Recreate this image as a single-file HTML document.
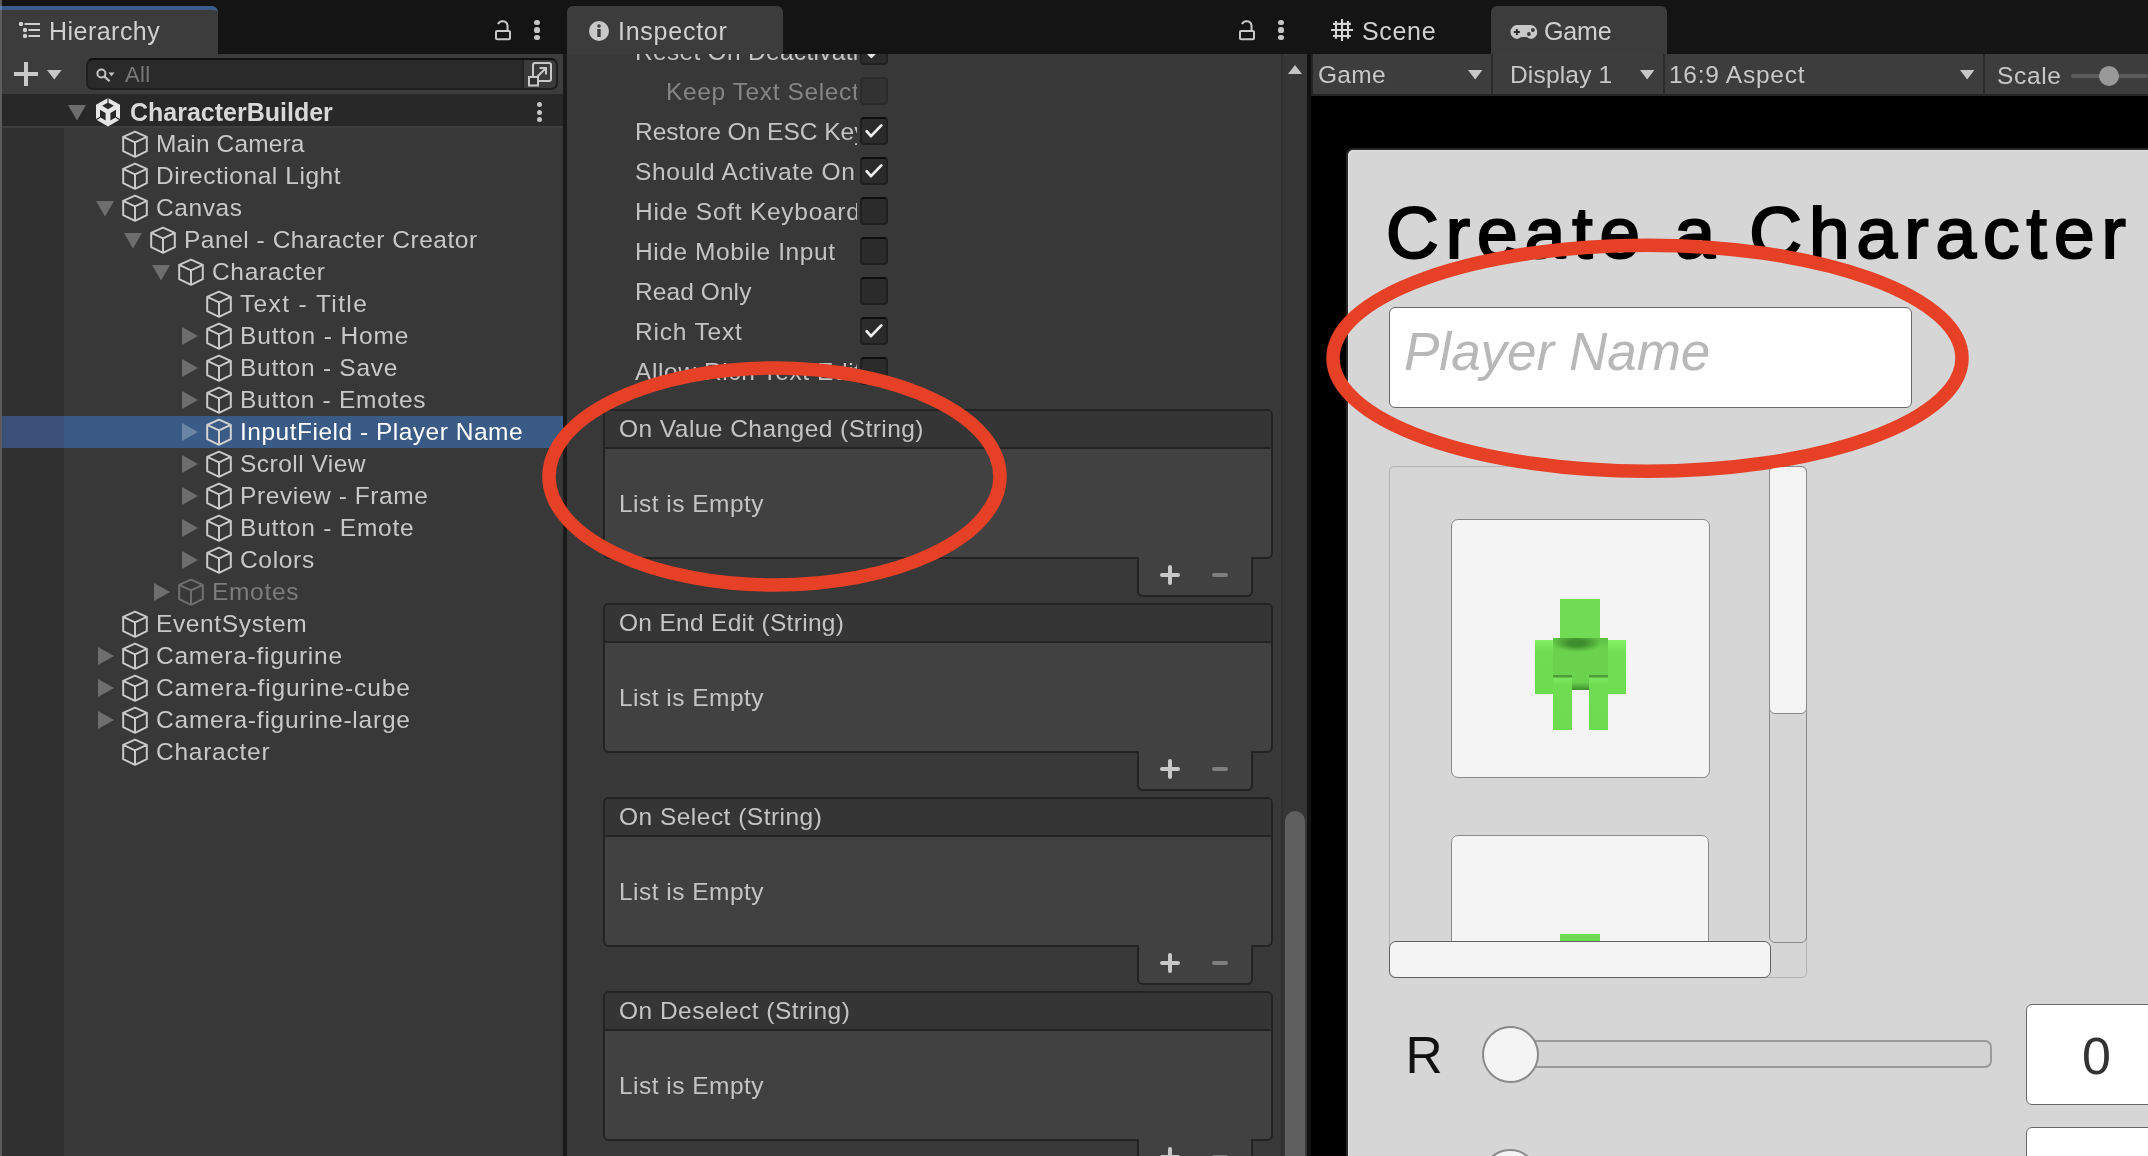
<!DOCTYPE html>
<html><head><meta charset="utf-8">
<style>
*{margin:0;padding:0;box-sizing:border-box}
html,body{width:2148px;height:1156px;overflow:hidden;background:#141414;font-family:"Liberation Sans",sans-serif;color:#c8c8c8}
.a{position:absolute}
.t{position:absolute;white-space:pre;font-size:24.5px;line-height:32px;letter-spacing:0.3px;will-change:transform}
svg{position:absolute;overflow:visible}
</style></head><body>

<div class="a" style="left:0;top:0;width:2px;height:1156px;background:#5c5c5c"></div>
<div class="a" style="left:2px;top:6px;width:216px;height:48px;background:#3c3c3c;border-radius:0 6px 0 0;border-top:4px solid #395e8e"></div>
<div class="a" style="left:0;top:6px;width:2px;height:4px;background:#5b7fa8"></div>
<div class="t" style="left:49.2px;top:14.6px;font-size:25px;letter-spacing:0.47px;color:#d0d0d0">Hierarchy</div>
<svg style="left:18px;top:21px" width="24" height="18" viewBox="0 0 24 18"><circle cx="3" cy="3" r="2.2" fill="#d0d0d0"/><circle cx="7" cy="9" r="2.2" fill="#d0d0d0"/><circle cx="7" cy="15" r="2.2" fill="#d0d0d0"/><path d="M6.5 3 H22 M10.5 9 H22 M10.5 15 H22" stroke="#d0d0d0" stroke-width="2"/></svg>
<svg style="left:494px;top:19px" width="18" height="22" viewBox="0 0 18 22"><path d="M4 5.2 A5 5 0 0 1 13.5 6.5 V12" fill="none" stroke="#c8c8c8" stroke-width="2"/><rect x="2" y="12" width="14" height="8.3" rx="1" fill="none" stroke="#c8c8c8" stroke-width="2"/></svg>
<div class="a" style="left:534.4px;top:19.9px;width:5.2px;height:5.2px;border-radius:50%;background:#c4c4c4"></div><div class="a" style="left:534.4px;top:27.4px;width:5.2px;height:5.2px;border-radius:50%;background:#c4c4c4"></div><div class="a" style="left:534.4px;top:34.9px;width:5.2px;height:5.2px;border-radius:50%;background:#c4c4c4"></div>
<div class="a" style="left:2px;top:54px;width:561px;height:40px;background:#3c3c3c"></div>
<div class="a" style="left:14px;top:72px;width:24px;height:4px;background:#c8c8c8"></div>
<div class="a" style="left:24px;top:62px;width:4px;height:24px;background:#c8c8c8"></div>
<svg style="left:47px;top:70px" width="15" height="10" viewBox="0 0 15 10"><path d="M0 0 H14.6 L7.3 9.6 Z" fill="#c8c8c8"/></svg>
<div class="a" style="left:86px;top:58px;width:472px;height:32px;background:#2a2a2a;border:2px solid #1f1f1f;border-top-color:#101010;border-radius:7px"></div>
<div class="a" style="left:522px;top:60px;width:34px;height:28px;background:#3b3b3b;border-left:2px solid #232323;border-radius:0 5px 5px 0"></div>
<svg style="left:95.5px;top:67.5px" width="20" height="17" viewBox="0 0 20 17"><circle cx="5.4" cy="5.5" r="4" fill="none" stroke="#c4c4c4" stroke-width="2"/><path d="M8.3 8.4 L13.6 13.3" stroke="#c4c4c4" stroke-width="2.2"/><path d="M12.5 4.4 H18.5 L15.5 8.3 Z" fill="#c4c4c4"/></svg>
<div class="t" style="left:124.5px;top:58.5px;font-size:22px;color:#787878;letter-spacing:0.4px">All</div>
<svg style="left:527px;top:61px" width="26" height="26" viewBox="0 0 26 26"><rect x="6" y="2" width="18" height="18" rx="2" fill="none" stroke="#c8c8c8" stroke-width="2"/><rect x="2" y="16" width="9" height="8.5" fill="#2f2f2f" stroke="#c8c8c8" stroke-width="2"/><path d="M9.5 16.5 L18.5 7.5 M12.5 6.9 H19 V13.4" fill="none" stroke="#c8c8c8" stroke-width="2"/></svg>
<div class="a" style="left:2px;top:94px;width:561px;height:1062px;background:#383838"></div>
<div class="a" style="left:2px;top:94px;width:62px;height:1062px;background:#303030"></div>
<div class="a" style="left:2px;top:94px;width:561px;height:32px;background:#282828"></div>
<div class="a" style="left:2px;top:126px;width:561px;height:2px;background:#3e3e3e"></div>
<div class="a" style="left:64px;top:416px;width:499px;height:32px;background:#3a5b85"></div>
<div class="a" style="left:2px;top:416px;width:62px;height:32px;background:#3a5079"></div>
<svg style="left:68px;top:105px" width="18" height="16" viewBox="0 0 18 16"><path d="M0 0 L18 0 L9 15.5 Z" fill="#6e6e6e"/></svg>
<svg style="left:96px;top:97.6px" width="24" height="29" viewBox="0 0 24 29"><path d="M12 0 L24 6.8 L24 21.4 L12 28.6 L0 21.4 L0 6.8 Z" fill="#e6e6e6"/><path d="M12 4.4 L17.9 7.8 L12 11.2 L6.1 7.8 Z M4 11.8 L9.6 15 L9.6 22.6 L4 19.3 Z M20 11.8 L20 19.3 L14.4 22.6 L14.4 15 Z" fill="#282828"/><path d="M12 0 V4.8 M4.3 19.3 L0 21.8 M19.7 19.3 L24 21.8" stroke="#1e1e1e" stroke-width="1.1"/></svg>
<div class="t" style="left:129.5px;top:95.9px;font-size:25px;font-weight:bold;color:#d8d8d8;letter-spacing:0px">CharacterBuilder</div>
<div class="a" style="left:536.5px;top:102.0px;width:5px;height:5px;border-radius:50%;background:#c4c4c4"></div>
<div class="a" style="left:536.5px;top:109.5px;width:5px;height:5px;border-radius:50%;background:#c4c4c4"></div>
<div class="a" style="left:536.5px;top:117.0px;width:5px;height:5px;border-radius:50%;background:#c4c4c4"></div>
<svg style="left:122px;top:130px" width="26" height="28" viewBox="0 0 26 28"><path d="M13 1.6 L24.8 6.9 L24.8 21.2 L13 26.8 L1.2 21.2 L1.2 6.9 Z M1.2 6.9 L13 12.4 L24.8 6.9 M13 12.4 L13 26.8" fill="none" stroke="#c9c9c9" stroke-width="2" stroke-linejoin="round"/></svg>
<div class="t" style="left:155.5px;top:127.7px;color:#c8c8c8;letter-spacing:0.140px">Main Camera</div>
<svg style="left:122px;top:162px" width="26" height="28" viewBox="0 0 26 28"><path d="M13 1.6 L24.8 6.9 L24.8 21.2 L13 26.8 L1.2 21.2 L1.2 6.9 Z M1.2 6.9 L13 12.4 L24.8 6.9 M13 12.4 L13 26.8" fill="none" stroke="#c9c9c9" stroke-width="2" stroke-linejoin="round"/></svg>
<div class="t" style="left:155.5px;top:159.7px;color:#c8c8c8;letter-spacing:0.556px">Directional Light</div>
<svg style="left:96px;top:201px" width="18" height="16" viewBox="0 0 18 16"><path d="M0 0 L18 0 L9 15.5 Z" fill="#6e6e6e"/></svg>
<svg style="left:122px;top:194px" width="26" height="28" viewBox="0 0 26 28"><path d="M13 1.6 L24.8 6.9 L24.8 21.2 L13 26.8 L1.2 21.2 L1.2 6.9 Z M1.2 6.9 L13 12.4 L24.8 6.9 M13 12.4 L13 26.8" fill="none" stroke="#c9c9c9" stroke-width="2" stroke-linejoin="round"/></svg>
<div class="t" style="left:155.5px;top:191.7px;color:#c8c8c8;letter-spacing:0.580px">Canvas</div>
<svg style="left:124px;top:233px" width="18" height="16" viewBox="0 0 18 16"><path d="M0 0 L18 0 L9 15.5 Z" fill="#6e6e6e"/></svg>
<svg style="left:150px;top:226px" width="26" height="28" viewBox="0 0 26 28"><path d="M13 1.6 L24.8 6.9 L24.8 21.2 L13 26.8 L1.2 21.2 L1.2 6.9 Z M1.2 6.9 L13 12.4 L24.8 6.9 M13 12.4 L13 26.8" fill="none" stroke="#c9c9c9" stroke-width="2" stroke-linejoin="round"/></svg>
<div class="t" style="left:183.5px;top:223.7px;color:#c8c8c8;letter-spacing:0.526px">Panel - Character Creator</div>
<svg style="left:152px;top:265px" width="18" height="16" viewBox="0 0 18 16"><path d="M0 0 L18 0 L9 15.5 Z" fill="#6e6e6e"/></svg>
<svg style="left:178px;top:258px" width="26" height="28" viewBox="0 0 26 28"><path d="M13 1.6 L24.8 6.9 L24.8 21.2 L13 26.8 L1.2 21.2 L1.2 6.9 Z M1.2 6.9 L13 12.4 L24.8 6.9 M13 12.4 L13 26.8" fill="none" stroke="#c9c9c9" stroke-width="2" stroke-linejoin="round"/></svg>
<div class="t" style="left:211.5px;top:255.7px;color:#c8c8c8;letter-spacing:0.675px">Character</div>
<svg style="left:206px;top:290px" width="26" height="28" viewBox="0 0 26 28"><path d="M13 1.6 L24.8 6.9 L24.8 21.2 L13 26.8 L1.2 21.2 L1.2 6.9 Z M1.2 6.9 L13 12.4 L24.8 6.9 M13 12.4 L13 26.8" fill="none" stroke="#c9c9c9" stroke-width="2" stroke-linejoin="round"/></svg>
<div class="t" style="left:239.5px;top:287.7px;color:#c8c8c8;letter-spacing:1.374px">Text - Title</div>
<svg style="left:182px;top:327px" width="16" height="18" viewBox="0 0 16 18"><path d="M0 0 L16 9 L0 18 Z" fill="#6e6e6e"/></svg>
<svg style="left:206px;top:322px" width="26" height="28" viewBox="0 0 26 28"><path d="M13 1.6 L24.8 6.9 L24.8 21.2 L13 26.8 L1.2 21.2 L1.2 6.9 Z M1.2 6.9 L13 12.4 L24.8 6.9 M13 12.4 L13 26.8" fill="none" stroke="#c9c9c9" stroke-width="2" stroke-linejoin="round"/></svg>
<div class="t" style="left:239.5px;top:319.7px;color:#c8c8c8;letter-spacing:0.867px">Button - Home</div>
<svg style="left:182px;top:359px" width="16" height="18" viewBox="0 0 16 18"><path d="M0 0 L16 9 L0 18 Z" fill="#6e6e6e"/></svg>
<svg style="left:206px;top:354px" width="26" height="28" viewBox="0 0 26 28"><path d="M13 1.6 L24.8 6.9 L24.8 21.2 L13 26.8 L1.2 21.2 L1.2 6.9 Z M1.2 6.9 L13 12.4 L24.8 6.9 M13 12.4 L13 26.8" fill="none" stroke="#c9c9c9" stroke-width="2" stroke-linejoin="round"/></svg>
<div class="t" style="left:239.5px;top:351.7px;color:#c8c8c8;letter-spacing:0.749px">Button - Save</div>
<svg style="left:182px;top:391px" width="16" height="18" viewBox="0 0 16 18"><path d="M0 0 L16 9 L0 18 Z" fill="#6e6e6e"/></svg>
<svg style="left:206px;top:386px" width="26" height="28" viewBox="0 0 26 28"><path d="M13 1.6 L24.8 6.9 L24.8 21.2 L13 26.8 L1.2 21.2 L1.2 6.9 Z M1.2 6.9 L13 12.4 L24.8 6.9 M13 12.4 L13 26.8" fill="none" stroke="#c9c9c9" stroke-width="2" stroke-linejoin="round"/></svg>
<div class="t" style="left:239.5px;top:383.7px;color:#c8c8c8;letter-spacing:0.707px">Button - Emotes</div>
<svg style="left:182px;top:423px" width="16" height="18" viewBox="0 0 16 18"><path d="M0 0 L16 9 L0 18 Z" fill="#6a85a6"/></svg>
<svg style="left:206px;top:418px" width="26" height="28" viewBox="0 0 26 28"><path d="M13 1.6 L24.8 6.9 L24.8 21.2 L13 26.8 L1.2 21.2 L1.2 6.9 Z M1.2 6.9 L13 12.4 L24.8 6.9 M13 12.4 L13 26.8" fill="none" stroke="#d2d2d2" stroke-width="2" stroke-linejoin="round"/></svg>
<div class="t" style="left:239.5px;top:415.7px;color:#ffffff;letter-spacing:0.505px">InputField - Player Name</div>
<svg style="left:182px;top:455px" width="16" height="18" viewBox="0 0 16 18"><path d="M0 0 L16 9 L0 18 Z" fill="#6e6e6e"/></svg>
<svg style="left:206px;top:450px" width="26" height="28" viewBox="0 0 26 28"><path d="M13 1.6 L24.8 6.9 L24.8 21.2 L13 26.8 L1.2 21.2 L1.2 6.9 Z M1.2 6.9 L13 12.4 L24.8 6.9 M13 12.4 L13 26.8" fill="none" stroke="#c9c9c9" stroke-width="2" stroke-linejoin="round"/></svg>
<div class="t" style="left:239.5px;top:447.7px;color:#c8c8c8;letter-spacing:0.480px">Scroll View</div>
<svg style="left:182px;top:487px" width="16" height="18" viewBox="0 0 16 18"><path d="M0 0 L16 9 L0 18 Z" fill="#6e6e6e"/></svg>
<svg style="left:206px;top:482px" width="26" height="28" viewBox="0 0 26 28"><path d="M13 1.6 L24.8 6.9 L24.8 21.2 L13 26.8 L1.2 21.2 L1.2 6.9 Z M1.2 6.9 L13 12.4 L24.8 6.9 M13 12.4 L13 26.8" fill="none" stroke="#c9c9c9" stroke-width="2" stroke-linejoin="round"/></svg>
<div class="t" style="left:239.5px;top:479.7px;color:#c8c8c8;letter-spacing:0.586px">Preview - Frame</div>
<svg style="left:182px;top:519px" width="16" height="18" viewBox="0 0 16 18"><path d="M0 0 L16 9 L0 18 Z" fill="#6e6e6e"/></svg>
<svg style="left:206px;top:514px" width="26" height="28" viewBox="0 0 26 28"><path d="M13 1.6 L24.8 6.9 L24.8 21.2 L13 26.8 L1.2 21.2 L1.2 6.9 Z M1.2 6.9 L13 12.4 L24.8 6.9 M13 12.4 L13 26.8" fill="none" stroke="#c9c9c9" stroke-width="2" stroke-linejoin="round"/></svg>
<div class="t" style="left:239.5px;top:511.7px;color:#c8c8c8;letter-spacing:0.793px">Button - Emote</div>
<svg style="left:182px;top:551px" width="16" height="18" viewBox="0 0 16 18"><path d="M0 0 L16 9 L0 18 Z" fill="#6e6e6e"/></svg>
<svg style="left:206px;top:546px" width="26" height="28" viewBox="0 0 26 28"><path d="M13 1.6 L24.8 6.9 L24.8 21.2 L13 26.8 L1.2 21.2 L1.2 6.9 Z M1.2 6.9 L13 12.4 L24.8 6.9 M13 12.4 L13 26.8" fill="none" stroke="#c9c9c9" stroke-width="2" stroke-linejoin="round"/></svg>
<div class="t" style="left:239.5px;top:543.7px;color:#c8c8c8;letter-spacing:0.680px">Colors</div>
<svg style="left:154px;top:583px" width="16" height="18" viewBox="0 0 16 18"><path d="M0 0 L16 9 L0 18 Z" fill="#6e6e6e"/></svg>
<svg style="left:178px;top:578px" width="26" height="28" viewBox="0 0 26 28"><path d="M13 1.6 L24.8 6.9 L24.8 21.2 L13 26.8 L1.2 21.2 L1.2 6.9 Z M1.2 6.9 L13 12.4 L24.8 6.9 M13 12.4 L13 26.8" fill="none" stroke="#6f6f6f" stroke-width="2" stroke-linejoin="round"/></svg>
<div class="t" style="left:211.5px;top:575.7px;color:#7c7c7c;letter-spacing:0.680px">Emotes</div>
<svg style="left:122px;top:610px" width="26" height="28" viewBox="0 0 26 28"><path d="M13 1.6 L24.8 6.9 L24.8 21.2 L13 26.8 L1.2 21.2 L1.2 6.9 Z M1.2 6.9 L13 12.4 L24.8 6.9 M13 12.4 L13 26.8" fill="none" stroke="#c9c9c9" stroke-width="2" stroke-linejoin="round"/></svg>
<div class="t" style="left:155.5px;top:607.7px;color:#c8c8c8;letter-spacing:0.630px">EventSystem</div>
<svg style="left:98px;top:647px" width="16" height="18" viewBox="0 0 16 18"><path d="M0 0 L16 9 L0 18 Z" fill="#6e6e6e"/></svg>
<svg style="left:122px;top:642px" width="26" height="28" viewBox="0 0 26 28"><path d="M13 1.6 L24.8 6.9 L24.8 21.2 L13 26.8 L1.2 21.2 L1.2 6.9 Z M1.2 6.9 L13 12.4 L24.8 6.9 M13 12.4 L13 26.8" fill="none" stroke="#c9c9c9" stroke-width="2" stroke-linejoin="round"/></svg>
<div class="t" style="left:155.5px;top:639.7px;color:#c8c8c8;letter-spacing:0.743px">Camera-figurine</div>
<svg style="left:98px;top:679px" width="16" height="18" viewBox="0 0 16 18"><path d="M0 0 L16 9 L0 18 Z" fill="#6e6e6e"/></svg>
<svg style="left:122px;top:674px" width="26" height="28" viewBox="0 0 26 28"><path d="M13 1.6 L24.8 6.9 L24.8 21.2 L13 26.8 L1.2 21.2 L1.2 6.9 Z M1.2 6.9 L13 12.4 L24.8 6.9 M13 12.4 L13 26.8" fill="none" stroke="#c9c9c9" stroke-width="2" stroke-linejoin="round"/></svg>
<div class="t" style="left:155.5px;top:671.7px;color:#c8c8c8;letter-spacing:0.889px">Camera-figurine-cube</div>
<svg style="left:98px;top:711px" width="16" height="18" viewBox="0 0 16 18"><path d="M0 0 L16 9 L0 18 Z" fill="#6e6e6e"/></svg>
<svg style="left:122px;top:706px" width="26" height="28" viewBox="0 0 26 28"><path d="M13 1.6 L24.8 6.9 L24.8 21.2 L13 26.8 L1.2 21.2 L1.2 6.9 Z M1.2 6.9 L13 12.4 L24.8 6.9 M13 12.4 L13 26.8" fill="none" stroke="#c9c9c9" stroke-width="2" stroke-linejoin="round"/></svg>
<div class="t" style="left:155.5px;top:703.7px;color:#c8c8c8;letter-spacing:0.785px">Camera-figurine-large</div>
<svg style="left:122px;top:738px" width="26" height="28" viewBox="0 0 26 28"><path d="M13 1.6 L24.8 6.9 L24.8 21.2 L13 26.8 L1.2 21.2 L1.2 6.9 Z M1.2 6.9 L13 12.4 L24.8 6.9 M13 12.4 L13 26.8" fill="none" stroke="#c9c9c9" stroke-width="2" stroke-linejoin="round"/></svg>
<div class="t" style="left:155.5px;top:735.7px;color:#c8c8c8;letter-spacing:0.750px">Character</div>
<div class="a" style="left:563px;top:54px;width:4px;height:1102px;background:#191919"></div>
<div class="a" style="left:567px;top:6px;width:216px;height:48px;background:#3c3c3c;border-radius:6px 6px 0 0"></div>
<div class="t" style="left:617.8px;top:14.6px;font-size:25px;letter-spacing:0.75px;color:#d0d0d0">Inspector</div>
<svg style="left:589px;top:21px" width="20" height="20" viewBox="0 0 20 20"><circle cx="10" cy="10" r="10" fill="#c8c8c8"/><circle cx="10" cy="5" r="1.8" fill="#3c3c3c"/><rect x="8.3" y="8" width="3.4" height="8" fill="#3c3c3c"/></svg>
<svg style="left:1238px;top:19px" width="18" height="22" viewBox="0 0 18 22"><path d="M4 5.2 A5 5 0 0 1 13.5 6.5 V12" fill="none" stroke="#c8c8c8" stroke-width="2"/><rect x="2" y="12" width="14" height="8.3" rx="1" fill="none" stroke="#c8c8c8" stroke-width="2"/></svg>
<div class="a" style="left:1278.4px;top:19.9px;width:5.2px;height:5.2px;border-radius:50%;background:#c4c4c4"></div><div class="a" style="left:1278.4px;top:27.4px;width:5.2px;height:5.2px;border-radius:50%;background:#c4c4c4"></div><div class="a" style="left:1278.4px;top:34.9px;width:5.2px;height:5.2px;border-radius:50%;background:#c4c4c4"></div>
<div class="a" style="left:567px;top:54px;width:740px;height:1102px;background:#383838"></div>
<div class="a" style="left:1281px;top:54px;width:2px;height:1102px;background:#2f2f2f"></div>
<div class="a" style="left:1283px;top:54px;width:24px;height:1102px;background:#363636"></div>
<div class="a" style="left:567px;top:54px;width:714px;height:1102px;overflow:hidden">
<div class="a" style="left:67.5px;top:-18.1px;width:222.5px;height:32px;overflow:hidden"><div class="t" style="left:0;top:0;color:#c4c4c4;letter-spacing:0.3px">Reset On Deactivation</div></div>
<div class="a" style="left:293px;top:-16.6px;width:28px;height:28px;background:#2b2b2b;border:2px solid #212121;border-radius:4px"></div>
<svg style="left:299.6px;top:-0.20000000000000284px" width="9" height="5" viewBox="0 0 9 5"><path d="M0 0 H8.8 L4.4 4.5 Z" fill="#e6e6e6"/></svg>
<div class="a" style="left:98.70000000000005px;top:21.599999999999994px;width:191.29999999999995px;height:32px;overflow:hidden"><div class="t" style="left:0;top:0;color:#858585;letter-spacing:0.62px">Keep Text Selection</div></div>
<div class="a" style="left:293px;top:23.099999999999994px;width:28px;height:28px;background:#323232;border:2px solid #2b2b2b;border-radius:4px"></div>
<div class="a" style="left:67.5px;top:61.900000000000006px;width:222.5px;height:32px;overflow:hidden"><div class="t" style="left:0;top:0;color:#c4c4c4;letter-spacing:0.0px">Restore On ESC Key</div></div>
<div class="a" style="left:293px;top:63.400000000000006px;width:28px;height:28px;background:#2b2b2b;border:2px solid #1f1f1f;border-top-color:#0d0d0d;border-radius:4px"><svg style="left:0;top:0" width="24" height="24" viewBox="0 0 24 24"><path d="M4.7 12.3 L9 17.1 L19.3 6.4" fill="none" stroke="#ececec" stroke-width="2.8" stroke-linecap="round" stroke-linejoin="round"/></svg></div>
<div class="a" style="left:67.5px;top:101.9px;width:222.5px;height:32px;overflow:hidden"><div class="t" style="left:0;top:0;color:#c4c4c4;letter-spacing:0.68px">Should Activate On Select</div></div>
<div class="a" style="left:293px;top:103.4px;width:28px;height:28px;background:#2b2b2b;border:2px solid #1f1f1f;border-top-color:#0d0d0d;border-radius:4px"><svg style="left:0;top:0" width="24" height="24" viewBox="0 0 24 24"><path d="M4.7 12.3 L9 17.1 L19.3 6.4" fill="none" stroke="#ececec" stroke-width="2.8" stroke-linecap="round" stroke-linejoin="round"/></svg></div>
<div class="a" style="left:67.5px;top:141.9px;width:222.5px;height:32px;overflow:hidden"><div class="t" style="left:0;top:0;color:#c4c4c4;letter-spacing:0.73px">Hide Soft Keyboard</div></div>
<div class="a" style="left:293px;top:143.4px;width:28px;height:28px;background:#2b2b2b;border:2px solid #1f1f1f;border-top-color:#0d0d0d;border-radius:4px"></div>
<div class="a" style="left:67.5px;top:181.9px;width:222.5px;height:32px;overflow:hidden"><div class="t" style="left:0;top:0;color:#c4c4c4;letter-spacing:0.58px">Hide Mobile Input</div></div>
<div class="a" style="left:293px;top:183.4px;width:28px;height:28px;background:#2b2b2b;border:2px solid #1f1f1f;border-top-color:#0d0d0d;border-radius:4px"></div>
<div class="a" style="left:67.5px;top:221.89999999999998px;width:222.5px;height:32px;overflow:hidden"><div class="t" style="left:0;top:0;color:#c4c4c4;letter-spacing:0.08px">Read Only</div></div>
<div class="a" style="left:293px;top:223.39999999999998px;width:28px;height:28px;background:#2b2b2b;border:2px solid #1f1f1f;border-top-color:#0d0d0d;border-radius:4px"></div>
<div class="a" style="left:67.5px;top:261.9px;width:222.5px;height:32px;overflow:hidden"><div class="t" style="left:0;top:0;color:#c4c4c4;letter-spacing:0.815px">Rich Text</div></div>
<div class="a" style="left:293px;top:263.4px;width:28px;height:28px;background:#2b2b2b;border:2px solid #1f1f1f;border-top-color:#0d0d0d;border-radius:4px"><svg style="left:0;top:0" width="24" height="24" viewBox="0 0 24 24"><path d="M4.7 12.3 L9 17.1 L19.3 6.4" fill="none" stroke="#ececec" stroke-width="2.8" stroke-linecap="round" stroke-linejoin="round"/></svg></div>
<div class="a" style="left:67.5px;top:301.9px;width:222.5px;height:32px;overflow:hidden"><div class="t" style="left:0;top:0;color:#c4c4c4;letter-spacing:0.6px">Allow Rich Text Editing</div></div>
<div class="a" style="left:293px;top:303.4px;width:28px;height:28px;background:#2b2b2b;border:2px solid #1f1f1f;border-top-color:#0d0d0d;border-radius:4px"></div>
<div class="a" style="left:36px;top:355px;width:670px;height:150px;background:#414141;border:2px solid #232323;border-radius:6px;overflow:hidden"><div class="a" style="left:0;top:0;width:666px;height:38px;background:#353535;border-bottom:2px solid #232323"></div></div>
<div class="a" style="left:570px;top:503px;width:116px;height:40px;background:#414141;border:2px solid #232323;border-top:none;border-radius:0 0 6px 6px"></div>
<div class="a" style="left:593px;top:519px;width:20px;height:4px;border-radius:2px;background:#c8c8c8"></div>
<div class="a" style="left:601px;top:511px;width:4px;height:20px;border-radius:2px;background:#c8c8c8"></div>
<div class="a" style="left:645px;top:519px;width:16px;height:4px;border-radius:2px;background:#7f7f7f"></div>
<div class="t" style="left:51.60000000000002px;top:359.4px;color:#c4c4c4;letter-spacing:0.45px">On Value Changed (String)</div>
<div class="t" style="left:51.60000000000002px;top:433.9px;color:#c4c4c4;letter-spacing:0.47px">List is Empty</div>
<div class="a" style="left:36px;top:549px;width:670px;height:150px;background:#414141;border:2px solid #232323;border-radius:6px;overflow:hidden"><div class="a" style="left:0;top:0;width:666px;height:38px;background:#353535;border-bottom:2px solid #232323"></div></div>
<div class="a" style="left:570px;top:697px;width:116px;height:40px;background:#414141;border:2px solid #232323;border-top:none;border-radius:0 0 6px 6px"></div>
<div class="a" style="left:593px;top:713px;width:20px;height:4px;border-radius:2px;background:#c8c8c8"></div>
<div class="a" style="left:601px;top:705px;width:4px;height:20px;border-radius:2px;background:#c8c8c8"></div>
<div class="a" style="left:645px;top:713px;width:16px;height:4px;border-radius:2px;background:#7f7f7f"></div>
<div class="t" style="left:51.60000000000002px;top:553.4px;color:#c4c4c4;letter-spacing:0.3px">On End Edit (String)</div>
<div class="t" style="left:51.60000000000002px;top:627.9px;color:#c4c4c4;letter-spacing:0.47px">List is Empty</div>
<div class="a" style="left:36px;top:743px;width:670px;height:150px;background:#414141;border:2px solid #232323;border-radius:6px;overflow:hidden"><div class="a" style="left:0;top:0;width:666px;height:38px;background:#353535;border-bottom:2px solid #232323"></div></div>
<div class="a" style="left:570px;top:891px;width:116px;height:40px;background:#414141;border:2px solid #232323;border-top:none;border-radius:0 0 6px 6px"></div>
<div class="a" style="left:593px;top:907px;width:20px;height:4px;border-radius:2px;background:#c8c8c8"></div>
<div class="a" style="left:601px;top:899px;width:4px;height:20px;border-radius:2px;background:#c8c8c8"></div>
<div class="a" style="left:645px;top:907px;width:16px;height:4px;border-radius:2px;background:#7f7f7f"></div>
<div class="t" style="left:51.60000000000002px;top:747.4px;color:#c4c4c4;letter-spacing:0.48px">On Select (String)</div>
<div class="t" style="left:51.60000000000002px;top:821.9px;color:#c4c4c4;letter-spacing:0.47px">List is Empty</div>
<div class="a" style="left:36px;top:937px;width:670px;height:150px;background:#414141;border:2px solid #232323;border-radius:6px;overflow:hidden"><div class="a" style="left:0;top:0;width:666px;height:38px;background:#353535;border-bottom:2px solid #232323"></div></div>
<div class="a" style="left:570px;top:1085px;width:116px;height:40px;background:#414141;border:2px solid #232323;border-top:none;border-radius:0 0 6px 6px"></div>
<div class="a" style="left:593px;top:1101px;width:20px;height:4px;border-radius:2px;background:#c8c8c8"></div>
<div class="a" style="left:601px;top:1093px;width:4px;height:20px;border-radius:2px;background:#c8c8c8"></div>
<div class="a" style="left:645px;top:1101px;width:16px;height:4px;border-radius:2px;background:#7f7f7f"></div>
<div class="t" style="left:51.60000000000002px;top:941.4px;color:#c4c4c4;letter-spacing:0.47px">On Deselect (String)</div>
<div class="t" style="left:51.60000000000002px;top:1015.9000000000001px;color:#c4c4c4;letter-spacing:0.47px">List is Empty</div>
</div>
<svg style="left:1288px;top:65px" width="14" height="9" viewBox="0 0 14 9"><path d="M7 0 L14 9 H0 Z" fill="#c4c4c4"/></svg>
<div class="a" style="left:1285px;top:811px;width:20px;height:400px;background:#5f5f5f;border-radius:10px"></div>
<div class="a" style="left:1307px;top:54px;width:4px;height:1102px;background:#121212"></div>
<div class="a" style="left:1491px;top:6px;width:176px;height:48px;background:#3c3c3c;border-radius:6px 6px 0 0"></div>
<div class="t" style="left:1361.5px;top:14.6px;font-size:25px;letter-spacing:0.675px;color:#d0d0d0">Scene</div>
<div class="t" style="left:1543.8px;top:14.6px;font-size:25px;letter-spacing:-0.13px;color:#d0d0d0">Game</div>
<svg style="left:1330px;top:18px" width="24" height="24" viewBox="0 0 24 24"><path d="M6 3 V20.8 M12 1.1 V22.9 M18 3 V20.8 M3 5.9 H20.9 M1.1 12 H23 M3 18 H20.9" stroke="#d4d4d4" stroke-width="2.1"/></svg>
<svg style="left:1509px;top:24px" width="30" height="16" viewBox="0 0 30 16"><path d="M7.5 0.9 H22 A7.1 7.1 0 0 1 22 15 C19.5 15 19 13.1 17 13.1 H13 C11 13.1 10.5 15 8 15 A7.1 7.1 0 0 1 7.5 0.9 Z" fill="#c8c8c8"/><path d="M4.9 7.9 H10.9 M7.9 4.9 V10.9" stroke="#2e2e2e" stroke-width="2"/><circle cx="23.9" cy="6" r="1.9" fill="#3a3a3a"/><circle cx="19.9" cy="10" r="1.9" fill="#3a3a3a"/></svg>
<div class="a" style="left:1311px;top:54px;width:837px;height:42px;background:#252525"></div>
<div class="a" style="left:1313px;top:54px;width:835px;height:40px;background:#3d3d3d"></div>
<div class="a" style="left:1311px;top:96px;width:837px;height:1060px;background:#000"></div>
<div class="a" style="left:1346px;top:148px;width:900px;height:1100px;background:#d6d6d6;border:2px solid #262626;border-radius:7px;box-shadow:inset 1px 1px 0 #e2e2e2"></div>
<div class="a" style="left:1491px;top:54px;width:2px;height:40px;background:#2a2a2a"></div>
<div class="a" style="left:1663px;top:54px;width:2px;height:40px;background:#2a2a2a"></div>
<div class="a" style="left:1983px;top:54px;width:2px;height:40px;background:#2a2a2a"></div>
<div class="t" style="left:1318px;top:58.7px;color:#c8c8c8">Game</div>
<svg style="left:1468px;top:69.5px" width="15" height="10" viewBox="0 0 15 10"><path d="M0 0 H14.4 L7.2 9.6 Z" fill="#c8c8c8"/></svg>
<div class="t" style="left:1510px;top:58.7px;color:#c8c8c8;letter-spacing:0.175px">Display 1</div>
<svg style="left:1640px;top:69.5px" width="15" height="10" viewBox="0 0 15 10"><path d="M0 0 H14.4 L7.2 9.6 Z" fill="#c8c8c8"/></svg>
<div class="t" style="left:1669px;top:58.7px;color:#c8c8c8;letter-spacing:0.74px">16:9 Aspect</div>
<svg style="left:1960px;top:69.5px" width="15" height="10" viewBox="0 0 15 10"><path d="M0 0 H14.4 L7.2 9.6 Z" fill="#c8c8c8"/></svg>
<div class="t" style="left:1996.8px;top:59.5px;color:#c8c8c8;letter-spacing:0.675px">Scale</div>
<div class="a" style="left:2071px;top:74px;width:77px;height:4px;background:#5c5c5c;border-radius:2px"></div>
<div class="a" style="left:2099px;top:66px;width:20px;height:20px;background:#999;border-radius:50%"></div>
<div class="a" style="left:1386px;top:193px;white-space:pre;font-size:73px;line-height:80px;font-weight:normal;-webkit-text-stroke:2.2px #000;color:#000;letter-spacing:7.0px">Create a Character</div>
<div class="a" style="left:1389px;top:307px;width:523px;height:101px;background:#fff;border:1.5px solid #6a6a6a;border-radius:6px"></div>
<div class="a" style="left:1404px;top:321.5px;white-space:pre;font-size:53px;line-height:60px;font-style:italic;color:#b8b8b8">Player Name</div>
<div class="a" style="left:1389px;top:466px;width:418px;height:512px;border:1.5px solid #b4b4b4;border-radius:5px"></div>
<div class="a" style="left:1451px;top:519px;width:259px;height:259px;background:#f4f4f4;border:1.5px solid #8a8a8a;border-radius:7px"></div>
<div class="a" style="left:1389px;top:466px;width:382px;height:476px;overflow:hidden"><div class="a" style="left:62px;top:369px;width:258px;height:259px;background:#f4f4f4;border:1.5px solid #8a8a8a;border-radius:7px"></div><div class="a" style="left:171px;top:468px;width:40px;height:20px;background:#6fdb50"></div></div>
<div class="a" style="left:1769px;top:466px;width:38px;height:477px;border:1.5px solid #8a8a8a;border-radius:6px"></div>
<div class="a" style="left:1769px;top:466px;width:38px;height:248px;background:#f4f4f4;border:1.5px solid #8a8a8a;border-radius:6px"></div>
<div class="a" style="left:1389px;top:941px;width:382px;height:37px;background:#f4f4f4;border:1.5px solid #5f5f5f;border-radius:7px"></div>
<div class="a" style="left:1560px;top:599px;width:40px;height:39.5px;background:#71db53"></div>
<div class="a" style="left:1535px;top:640px;width:18px;height:54px;background:linear-gradient(#84f064,#6fdc52 12px,#6ddb50)"></div>
<div class="a" style="left:1608px;top:640px;width:18px;height:54px;background:linear-gradient(#84f064,#72df55 12px,#6fdd52)"></div>
<div class="a" style="left:1553px;top:638px;width:55px;height:52px;background:radial-gradient(ellipse 24px 9px at 24px 5px,#3b8a2a 0%,#3f8f2e 35%,rgba(107,210,77,0) 100%),linear-gradient(#5cbf43 0px,#6bd24d 10px,#6bd24d 44px,#3f8f2e 52px)"></div>
<div class="a" style="left:1553px;top:675px;width:19px;height:55px;background:linear-gradient(#4c9c3a 0px,#4c9c3a 2px,#7be85c 3px,#70dc52 10px,#6ddb50)"></div>
<div class="a" style="left:1589px;top:675px;width:19px;height:55px;background:linear-gradient(#4c9c3a 0px,#4c9c3a 2px,#7be85c 3px,#70dc52 10px,#6ddb50)"></div>
<div class="a" style="left:1405.5px;top:1025px;white-space:pre;font-size:51.5px;line-height:60px;color:#111">R</div>
<div class="a" style="left:1484px;top:1040px;width:508px;height:28px;background:#d3d3d3;border:2px solid #9a9a9a;border-radius:7px"></div>
<div class="a" style="left:1482px;top:1026px;width:57px;height:57px;background:#f4f4f4;border:2px solid #8a8a8a;border-radius:50%"></div>
<div class="a" style="left:2026px;top:1004px;width:200px;height:101px;background:#fff;border:1.5px solid #6a6a6a;border-radius:6px"></div>
<div class="a" style="left:2082px;top:1026px;white-space:pre;font-size:52px;line-height:60px;color:#333">0</div>
<div class="a" style="left:2026px;top:1127px;width:200px;height:101px;background:#fff;border:1.5px solid #6a6a6a;border-radius:6px"></div>
<div class="a" style="left:1482px;top:1149px;width:56px;height:56px;background:#f4f4f4;border:2px solid #8a8a8a;border-radius:50%"></div>
<svg style="left:0;top:0" width="2148" height="1156" viewBox="0 0 2148 1156"><ellipse cx="774.5" cy="476.5" rx="225.5" ry="108.5" fill="none" stroke="#e64027" stroke-width="13.5"/><ellipse cx="1647.5" cy="358.2" rx="314.5" ry="113" fill="none" stroke="#e64027" stroke-width="13.5"/></svg>
</body></html>
